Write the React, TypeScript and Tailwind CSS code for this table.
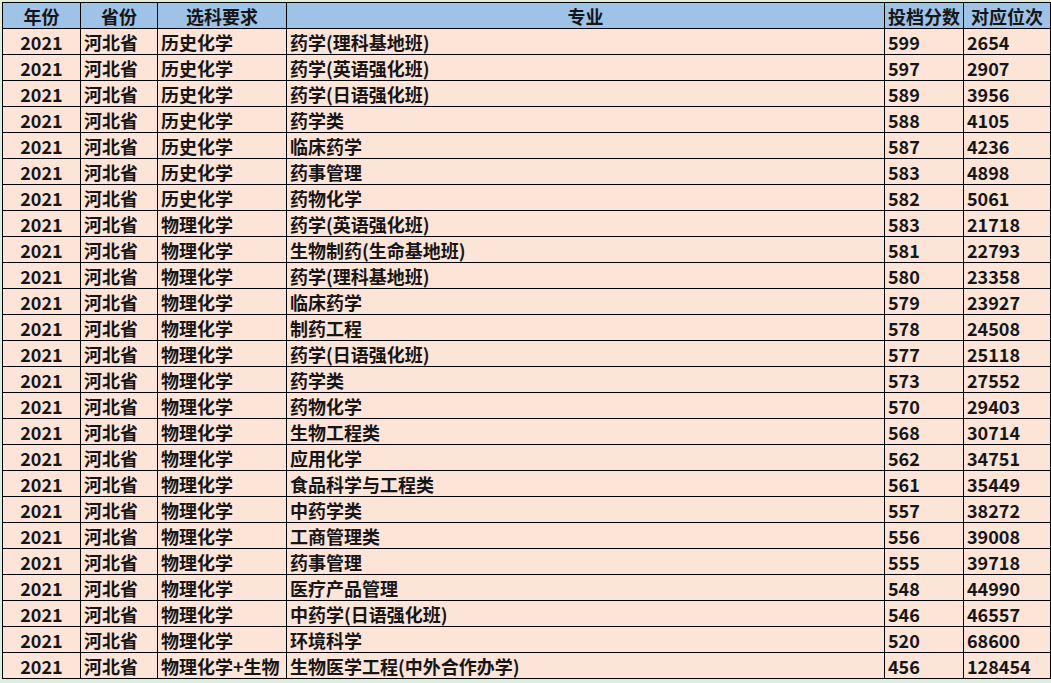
const rows: [string, string, string, string, string][] = [
  ["历史化学", "药学(理科基地班)", "599", "2654"],
  ["历史化学", "药学(英语强化班)", "597", "2907"],
  ["历史化学", "药学(日语强化班)", "589", "3956"],
  ["历史化学", "药学类", "588", "4105"],
  ["历史化学", "临床药学", "587", "4236"],
  ["历史化学", "药事管理", "583", "4898"],
  ["历史化学", "药物化学", "582", "5061"],
  ["物理化学", "药学(英语强化班)", "583", "21718"],
  ["物理化学", "生物制药(生命基地班)", "581", "22793"],
  ["物理化学", "药学(理科基地班)", "580", "23358"],
  ["物理化学", "临床药学", "579", "23927"],
  ["物理化学", "制药工程", "578", "24508"],
  ["物理化学", "药学(日语强化班)", "577", "25118"],
  ["物理化学", "药学类", "573", "27552"],
  ["物理化学", "药物化学", "570", "29403"],
  ["物理化学", "生物工程类", "568", "30714"],
  ["物理化学", "应用化学", "562", "34751"],
  ["物理化学", "食品科学与工程类", "561", "35449"],
  ["物理化学", "中药学类", "557", "38272"],
  ["物理化学", "工商管理类", "556", "39008"],
  ["物理化学", "药事管理", "555", "39718"],
  ["物理化学", "医疗产品管理", "548", "44990"],
  ["物理化学", "中药学(日语强化班)", "546", "46557"],
  ["物理化学", "环境科学", "520", "68600"],
  ["物理化学+生物", "生物医学工程(中外合作办学)", "456", "128454"],
].map((r) => ["2021", ...r] as unknown as [string, string, string, string, string]);

const cell = "border border-black h-[26px] px-[3px] whitespace-nowrap overflow-hidden leading-none";

export default function App() {
  return (
    <div
      className="w-[1051px] h-[683px] bg-[#dcefdd] pt-[2px] pl-[2px] overflow-hidden"
      style={{ fontFamily: '"Noto Sans CJK SC", "Noto Sans", sans-serif' }}
    >
      <table className="table-fixed border-collapse text-[18px] font-bold text-[#161616]">
        <colgroup>
          <col className="w-[78px]" />
          <col className="w-[77px]" />
          <col className="w-[129px]" />
          <col className="w-[598px]" />
          <col className="w-[77px]" />
          <col className="w-[87px]" />
        </colgroup>
        <thead>
          <tr className="bg-[#9dc3e6]">
            {["年份", "省份", "选科要求", "专业", "投档分数", "对应位次"].map((h) => (
              <th key={h} className={`${cell} text-center font-bold`}>
                {h}
              </th>
            ))}
          </tr>
        </thead>
        <tbody>
          {rows.map((r, i) => (
            <tr key={i} className="bg-[#fce4d6]">
              <td className={`${cell} text-center`}>{r[0]}</td>
              <td className={cell}>河北省</td>
              <td className={cell}>{r[1]}</td>
              <td className={cell}>{r[2]}</td>
              <td className={cell}>{r[3]}</td>
              <td className={cell}>{r[4]}</td>
            </tr>
          ))}
        </tbody>
      </table>
    </div>
  );
}
